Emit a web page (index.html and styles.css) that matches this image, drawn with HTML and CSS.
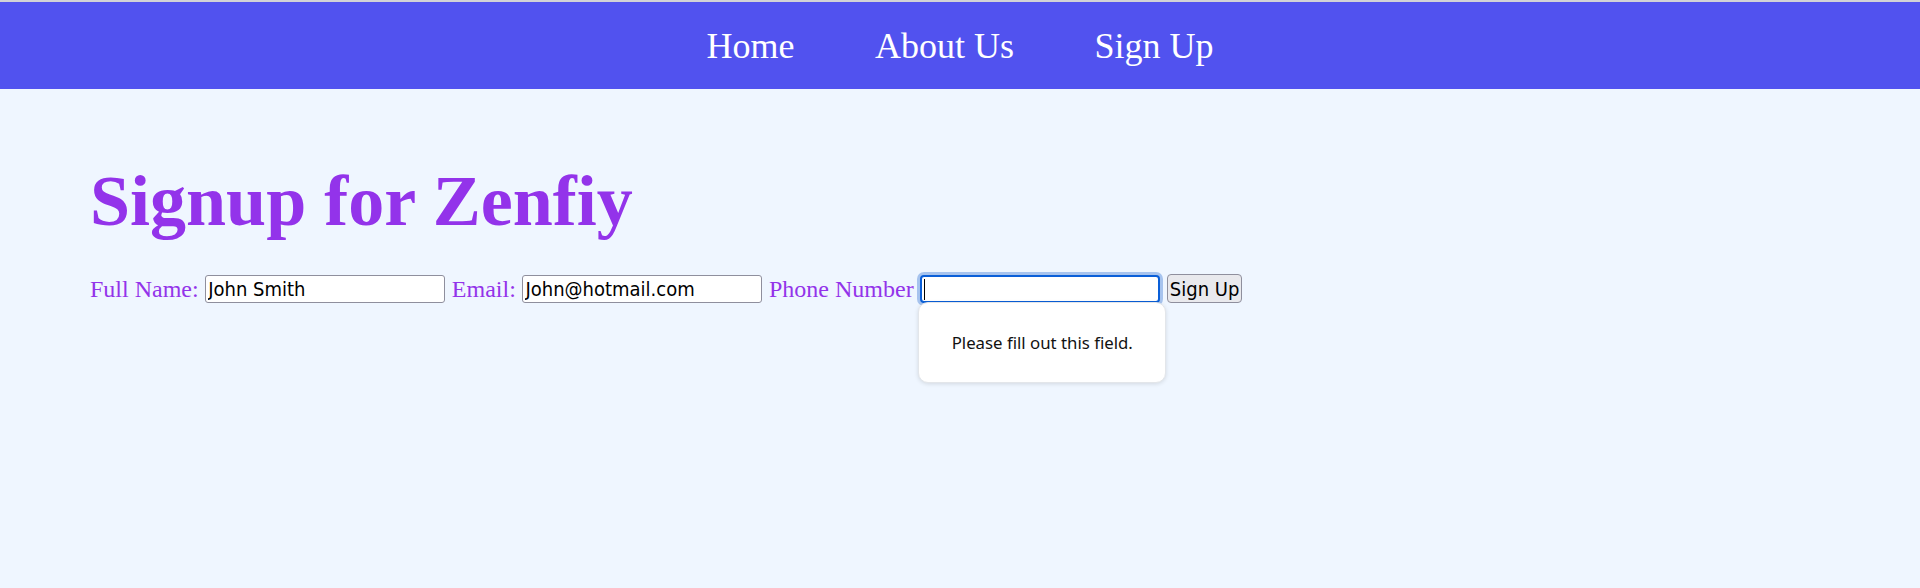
FILE: index.html
```html
<!DOCTYPE html>
<html lang="en">
<head>
<meta charset="utf-8">
<title>Signup for Zenfiy</title>
<link rel="stylesheet" href="styles.css">
</head>
<body>
  <header class="topbar">
    <nav class="nav">
      <a class="nav-link" href="#">Home</a>
      <a class="nav-link" href="#">About Us</a>
      <a class="nav-link" href="#">Sign Up</a>
    </nav>
  </header>
  <main class="content">
    <h1 class="title">Signup for Zenfiy</h1>
    <form class="signup-form">
      <label class="field-label" for="name">Full Name:</label>
      <input class="field" id="name" type="text" value="John Smith">
      <label class="field-label" for="email">Email:</label>
      <input class="field" id="email" type="email" value="John@hotmail.com">
      <label class="field-label" for="phone">Phone Number</label>
      <span class="focus-wrap">
        <input class="field field-focused" id="phone" type="tel" required>
        <span class="caret"></span>
        <span class="tooltip">Please fill out this field.</span>
      </span>
      <button class="submit" type="button">Sign Up</button>
    </form>
  </main>
</body>
</html>
```

FILE: styles.css
```css
html, body {
  margin: 0;
  padding: 0;
}

body {
  background: #eff6ff;
  min-height: 588px;
  font-family: "Liberation Serif", "Times New Roman", serif;
  border-top: 2px solid #d2d2d6;
  box-sizing: border-box;
}

.topbar {
  background: #5152ef;
  height: 87px;
  display: flex;
  align-items: center;
  justify-content: center;
}

.nav {
  display: flex;
  gap: 80.5px;
  padding-top: 1px;
}

.nav-link {
  color: #ffffff;
  text-decoration: none;
  font-size: 36px;
  font-family: "Liberation Serif", "Times New Roman", serif;
}

.content {
  padding: 71px 0 0 90px;
}

.title {
  margin: 0;
  font-size: 72px;
  font-weight: bold;
  color: #9333ea;
  line-height: normal;
}

.signup-form {
  margin-top: 31px;
  display: flex;
  align-items: center;
  gap: 6.6px;
}

.field-label {
  color: #9333ea;
  font-size: 24px;
  line-height: 28px;
}

.field {
  box-sizing: border-box;
  width: 240px;
  height: 28px;
  margin: 0;
  padding: 0 2px;
  border: 1px solid #8f8f9d;
  border-radius: 3px;
  background: #ffffff;
  color: #000000;
  font-family: "DejaVu Sans Condensed", "DejaVu Sans", sans-serif;
  font-stretch: condensed;
  font-size: 20px;
  outline: none;
}

.focus-wrap {
  position: relative;
  display: block;
}

.field-focused {
  border: 2px solid #0a5fd8;
  border-radius: 4px;
  box-shadow: 0 0 0 3px #a6c3ee;
}

.caret {
  position: absolute;
  left: 4px;
  top: 4px;
  width: 1px;
  height: 21px;
  background: #000000;
}

.tooltip {
  position: absolute;
  left: -2px;
  top: calc(100% - 1px);
  width: 248px;
  height: 81px;
  box-sizing: border-box;
  display: flex;
  align-items: center;
  justify-content: center;
  background: #ffffff;
  border: 1px solid #e3e6ea;
  border-radius: 10px;
  box-shadow: 0 1px 4px rgba(0, 0, 0, 0.12);
  font-family: "Noto Sans", "Open Sans", sans-serif;
  font-size: 16.8px;
  color: #111111;
}

.submit {
  box-sizing: border-box;
  height: 29px;
  margin: 0;
  padding: 0 2px;
  border: 1px solid #8f8f9d;
  border-radius: 4px;
  background: #e9e9ed;
  color: #000000;
  font-family: "DejaVu Sans Condensed", "DejaVu Sans", sans-serif;
  font-stretch: condensed;
  font-size: 20px;
}
```
